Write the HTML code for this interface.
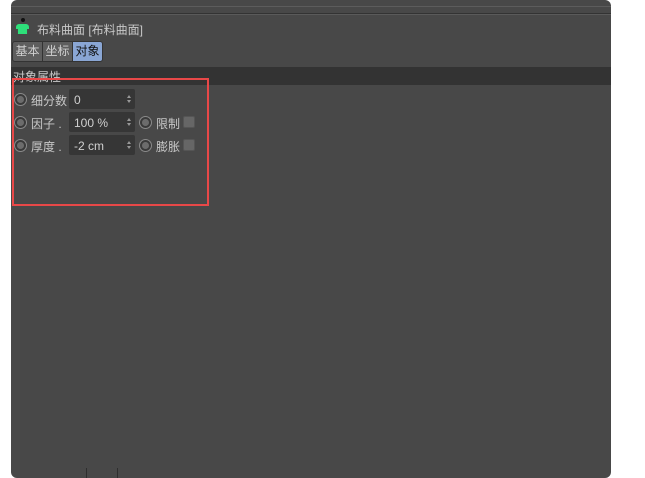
<!DOCTYPE html>
<html><head><meta charset="utf-8"><style>
body{margin:0;width:645px;height:478px;background:#fff;position:relative;overflow:hidden;font-family:"Liberation Sans","Noto Sans CJK SC",sans-serif;font-size:12px;}
.panel{position:absolute;left:11px;top:0;width:600px;height:478px;background:#484848;border-radius:6px;overflow:hidden}
.a{position:absolute}
.t{color:#c8c8c8;position:absolute;white-space:nowrap}
.radio{position:absolute;width:11px;height:11px;border-radius:50%;background:#4a4a4a;border:1px solid #8a8a8a;box-shadow:inset 0 0 0 2px #3a3a3a}
.radio::after{content:"";position:absolute;left:2px;top:2px;width:7px;height:7px;border-radius:50%;background:#6c6c6c}
.field{position:absolute;left:58px;width:66px;height:20px;background:#363636;border-radius:2px;color:#d0d0d0;line-height:22px;text-indent:5px}
.field::after{content:"";position:absolute;right:4px;top:6px;border-left:2px solid transparent;border-right:2px solid transparent;border-bottom:3px solid #999}
.field::before{content:"";position:absolute;right:4px;top:11px;border-left:2px solid transparent;border-right:2px solid transparent;border-top:3px solid #999}
.cb{position:absolute;width:10px;height:10px;background:#666;border-radius:2px;border:1px solid #555}
</style></head><body>
<div class="panel">
<div class="a" style="left:0;top:6px;width:600px;height:1px;background:#5c5c5c"></div>
<div class="a" style="left:0;top:13px;width:600px;height:1px;background:#333"></div>
<div class="a" style="left:0;top:14px;width:600px;height:1px;background:#5a5a5a"></div>
<div class="a" style="left:10px;top:18px;width:4px;height:4px;border-radius:50%;background:#111"></div>
<div class="a" style="left:5px;top:24px;width:13px;height:10px;background:#2ee07a;border-radius:3px 3px 2px 2px;clip-path:polygon(0 0,100% 0,100% 50%,85% 50%,85% 100%,15% 100%,15% 50%,0 50%)"></div>
<div class="t" style="left:26px;top:21px">布料曲面 [布料曲面]</div>
<div class="a" style="left:1px;top:41px;width:29px;height:19px;background:#5e5e5e;border:1px solid #333;border-radius:3px 0 0 3px;color:#d0d0d0;line-height:19px;text-align:center">基本</div>
<div class="a" style="left:31px;top:41px;width:29px;height:19px;background:#5e5e5e;border:1px solid #333;color:#d0d0d0;line-height:19px;text-align:center">坐标</div>
<div class="a" style="left:61px;top:41px;width:29px;height:19px;background:#8aa6d4;border:1px solid #333;border-radius:0 3px 3px 0;color:#111;line-height:19px;text-align:center">对象</div>
<div class="a" style="left:0;top:67px;width:600px;height:18px;background:#333"></div>
<div class="t" style="left:2px;top:68px">对象属性</div>
<div class="a" style="left:1px;top:78px;width:197px;height:128px;border:2px solid #e84848;box-sizing:border-box;"></div>

<div class="radio" style="left:3px;top:93px"></div><div class="t" style="left:20px;top:92px">细分数</div>
<div class="field" style="top:89px">0</div>

<div class="radio" style="left:3px;top:116px"></div><div class="t" style="left:20px;top:115px">因子 .</div>
<div class="field" style="top:112px">100 %</div>
<div class="radio" style="left:128px;top:116px"></div><div class="t" style="left:145px;top:115px">限制</div>
<div class="cb" style="left:172px;top:116px"></div>

<div class="radio" style="left:3px;top:139px"></div><div class="t" style="left:20px;top:138px">厚度 .</div>
<div class="field" style="top:135px">-2 cm</div>
<div class="radio" style="left:128px;top:139px"></div><div class="t" style="left:145px;top:138px">膨胀</div>
<div class="cb" style="left:172px;top:139px"></div>

<div class="a" style="left:75px;top:468px;width:1px;height:10px;background:#2e2e2e"></div>
<div class="a" style="left:106px;top:468px;width:1px;height:10px;background:#2e2e2e"></div>
</div>
</body></html>
